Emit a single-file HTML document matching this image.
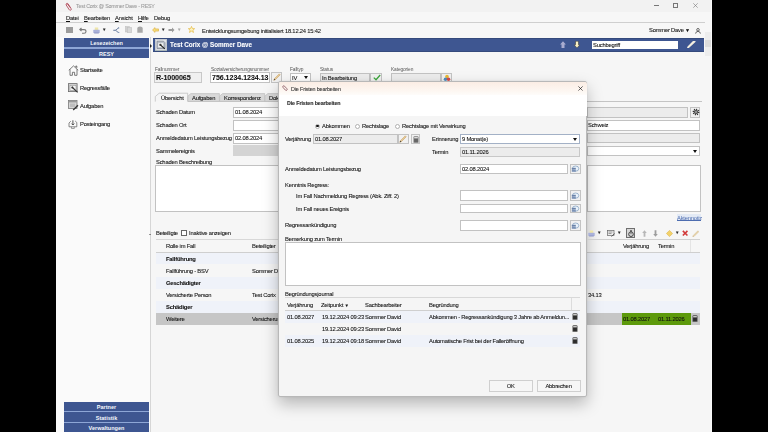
<!DOCTYPE html>
<html><head><meta charset="utf-8">
<style>
*{margin:0;padding:0;box-sizing:border-box}
html,body{width:768px;height:432px;overflow:hidden;background:#000}
body{-webkit-font-smoothing:antialiased;position:relative;font-family:"Liberation Sans",sans-serif;font-size:5.8px;letter-spacing:-0.2px;color:#111}
.a{position:absolute}
.t{position:absolute;will-change:transform;-webkit-text-stroke:0.08px currentColor;white-space:nowrap;line-height:8px;height:8px}
.b{font-weight:bold}
u{text-decoration-thickness:0.5px;text-underline-offset:0.8px}
.win{left:56px;top:0;width:656px;height:432px;background:#f7f7f7}
.fld{position:absolute;background:#fff;border:1px solid #c2c2c2}
.gry{background:#ececec}
.btn{position:absolute;background:#f1f1f1;border:1px solid #c3c3c3}
.blue{position:absolute;background:#3e5691;color:#f4f6fb;font-weight:bold;text-align:center;letter-spacing:0;padding-top:0.8px}
</style></head><body>
<div class="a win"></div>
<!-- title bar -->
<div class="a" style="left:56px;top:0;width:656px;height:11.7px;background:#f2f2f2"></div>
<div class="t" style="left:76px;top:2px;color:#9a9a9a;font-size:5.3px">Test Corix @ Sommer Dave - RESY</div>
<div class="a" style="left:653.5px;top:5.2px;width:5.5px;height:0.6px;background:#777"></div>
<div class="a" style="left:673px;top:3px;width:4.8px;height:4.8px;border:0.6px solid #777"></div>
<svg class="a" style="left:692.8px;top:2.8px" width="5" height="5" viewBox="0 0 5 5"><path d="M0.3 0.3 L4.7 4.7 M4.7 0.3 L0.3 4.7" stroke="#777" stroke-width="0.6"/></svg>
<!-- menu -->
<div class="t" style="left:65.8px;top:14px"><u>D</u>atei</div>
<div class="t" style="left:83.5px;top:14px"><u>B</u>earbeiten</div>
<div class="t" style="left:115px;top:14px"><u>A</u>nsicht</div>
<div class="t" style="left:137.7px;top:14px"><u>H</u>ilfe</div>
<div class="t" style="left:154px;top:14px">Debug</div>
<div class="a" style="left:56px;top:22px;width:649px;height:1px;background:#cfcfcf"></div>
<!-- status -->
<div class="t" style="left:201.7px;top:26.5px">Entwicklungsumgebung initialisiert 18.12.24 15:42</div>
<div class="t" style="left:649px;top:26px">Sommer Dave</div>
<div class="t" style="left:685px;top:26px;font-size:5px">&#9660;</div>

<!-- sidebar -->
<div class="a" style="left:56px;top:37px;width:94px;height:395px;background:#fafafa"></div>
<div class="a" style="left:150px;top:37px;width:1px;height:395px;background:#d6d6d6"></div>
<div class="blue" style="left:64px;top:38px;width:85px;height:9px;line-height:9px;font-size:5.5px">Lesezeichen</div>
<div class="a" style="left:64px;top:47px;width:85px;height:2px;background:#8ea6d6"></div>
<div class="blue" style="left:64px;top:49px;width:85px;height:9px;line-height:9px;font-size:5.5px">RESY</div>
<div class="t" style="left:80px;top:66px">Startseite</div>
<div class="t" style="left:80px;top:84px">Regressfälle</div>
<div class="t" style="left:80px;top:102px">Aufgaben</div>
<div class="t" style="left:80px;top:120px">Posteingang</div>
<div class="blue" style="left:64px;top:402px;width:85px;height:9px;line-height:9px;font-size:5.5px">Partner</div>
<div class="a" style="left:64px;top:411px;width:85px;height:1px;background:#8ea6d6"></div>
<div class="blue" style="left:64px;top:412px;width:85px;height:10px;line-height:10px;font-size:5.5px">Statistik</div>
<div class="a" style="left:64px;top:422px;width:85px;height:1px;background:#8ea6d6"></div>
<div class="blue" style="left:64px;top:423px;width:85px;height:9px;line-height:9px;font-size:5.5px">Verwaltungen</div>

<!-- main header -->
<div class="a" style="left:152.6px;top:38.3px;width:551.4px;height:13.3px;background:#3e5691;border-top:0.8px solid #354a7c;border-bottom:0.8px solid #354a7c"></div>
<div class="a" style="left:154.7px;top:39.2px;width:12px;height:11.5px;background:#d9dde3;border:1px solid #9aa"></div>
<div class="t b" style="left:169.7px;top:41px;color:#fff;font-size:6.3px;letter-spacing:0">Test Corix @ Sommer Dave</div>
<div class="fld" style="left:591.6px;top:40.6px;width:86.7px;height:8.7px;border:none"></div>
<div class="t" style="left:593px;top:41px">Suchbegriff</div>


<!-- main panel -->
<div class="a" style="left:151px;top:52px;width:553px;height:380px;background:#f6f6f6"></div>
<div class="a" style="left:704px;top:37px;width:8px;height:395px;background:#f6f6f6"></div>
<div class="a" style="left:705.2px;top:32px;width:6px;height:23.7px;background:#ededed"></div>
<div class="a" style="left:705.2px;top:40px;width:6px;height:7.4px;background:#dcdcdc"></div>
<div class="a" style="left:711.2px;top:0;width:0.8px;height:432px;background:#fafafa"></div>
<!-- top fields -->
<div class="t" style="left:155.3px;top:65.8px;font-size:4.8px;letter-spacing:-0.1px;color:#555;-webkit-text-stroke:0">Fallnummer</div>
<div class="fld" style="left:154.4px;top:72.2px;width:47.4px;height:10.4px;background:#f0f0f0;border-color:#c8c8c8"></div>
<div class="t b" style="left:156.2px;top:73.5px;font-size:7.2px;letter-spacing:-0.1px;line-height:8px">R-1000065</div>
<div class="t" style="left:210.5px;top:65.8px;font-size:4.8px;letter-spacing:-0.1px;color:#555;-webkit-text-stroke:0">Sozialversicherungsnummer</div>
<div class="fld" style="left:210px;top:72.2px;width:59.8px;height:10.4px"></div>
<div class="t b" style="left:211.8px;top:73.5px;font-size:7px;letter-spacing:0;line-height:8px">756.1234.1234.13</div>
<div class="btn" style="left:271px;top:72.2px;width:11px;height:10.4px"></div>
<div class="t" style="left:290.3px;top:65.8px;font-size:4.8px;letter-spacing:-0.1px;color:#555;-webkit-text-stroke:0">Falltyp</div>
<div class="fld" style="left:290px;top:72.5px;width:21px;height:10px"></div>
<div class="t" style="left:291.5px;top:73.5px">IV</div>
<div class="a" style="left:303.8px;top:76px;width:0;height:0;border-top:3px solid #111;border-left:2.6px solid transparent;border-right:2.6px solid transparent"></div>
<div class="t" style="left:320px;top:65.8px;font-size:4.8px;letter-spacing:-0.1px;color:#555;-webkit-text-stroke:0">Status</div>
<div class="fld" style="left:320px;top:72.5px;width:50.3px;height:10px;background:#ececec"></div>
<div class="t" style="left:321.5px;top:73.5px">In Bearbeitung</div>
<div class="btn" style="left:370.3px;top:72.5px;width:11.7px;height:10px"></div>
<div class="t" style="left:390.6px;top:65.8px;font-size:4.8px;letter-spacing:-0.1px;color:#555;-webkit-text-stroke:0">Kategorien</div>
<div class="fld" style="left:390.6px;top:72.5px;width:50px;height:10px;background:#ececec"></div>
<div class="btn" style="left:440.6px;top:72.5px;width:11.7px;height:10px"></div>
<!-- tabs -->
<div class="a" style="left:187.7px;top:101.2px;width:514.3px;height:0.8px;background:#c4c4c4"></div>
<svg class="a" style="left:150px;top:90px" width="140" height="13" viewBox="150 90 140 13">
<path d="M155.3 101.6 V96.5 L159.2 93.2 H187.7 V101.6" fill="#f5f5f5" stroke="#b9b9b9" stroke-width="0.7"/>
<path d="M187.9 101.4 V96.2 L190.8 93.6 H219.4 V101.4 Z" fill="#d9d9d9" stroke="#bdbdbd" stroke-width="0.7"/>
<path d="M219.6 101.4 V96.2 L222.5 93.6 H264.7 V101.4 Z" fill="#d9d9d9" stroke="#bdbdbd" stroke-width="0.7"/>
<path d="M264.9 101.4 V96.2 L267.8 93.6 H300 V101.4 Z" fill="#d9d9d9" stroke="#bdbdbd" stroke-width="0.7"/>
</svg>
<div class="t" style="left:161px;top:93.6px">Übersicht</div>
<div class="t" style="left:192px;top:93.8px">Aufgaben</div>
<div class="t" style="left:223.5px;top:93.8px">Korrespondenz</div>
<div class="t" style="left:268.5px;top:93.8px">Dokumente</div>
<!-- form rows -->
<div class="t" style="left:155.5px;top:108.3px">Schaden Datum</div>
<div class="fld" style="left:233.3px;top:106.5px;width:60px;height:11px"></div>
<div class="t" style="left:235px;top:108.3px">01.08.2024</div>
<div class="t" style="left:155.5px;top:121px">Schaden Ort</div>
<div class="fld" style="left:233.3px;top:119.5px;width:60px;height:11px"></div>
<div class="t" style="left:155.5px;top:134.2px">Anmeldedatum Leistungsbezug</div>
<div class="fld" style="left:233.3px;top:132.7px;width:60px;height:11px"></div>
<div class="t" style="left:235px;top:134.2px">02.08.2024</div>
<div class="t" style="left:155.5px;top:147px">Sammelereignis</div>
<div class="a" style="left:233.3px;top:145.4px;width:60px;height:11px;background:#d4d4d4"></div>
<div class="t" style="left:155.5px;top:157.6px">Schaden Beschreibung</div>
<div class="fld" style="left:155.1px;top:164.8px;width:140px;height:47px"></div>
<div class="fld" style="left:587px;top:106.5px;width:101.3px;height:11.2px;background:#ececec"></div>
<div class="btn" style="left:690.4px;top:106.5px;width:10px;height:11.2px"></div>
<div class="fld" style="left:587px;top:119.5px;width:113.3px;height:11.1px"></div>
<div class="t" style="left:588.4px;top:121px">Schweiz</div>
<div class="fld" style="left:587px;top:132.7px;width:113.3px;height:10.8px;background:#ececec"></div>
<div class="fld" style="left:587px;top:145.6px;width:113.3px;height:10.6px"></div>
<div class="a" style="left:692.6px;top:149.6px;width:0;height:0;border-top:3px solid #111;border-left:2.6px solid transparent;border-right:2.6px solid transparent"></div>
<div class="fld" style="left:587px;top:165.2px;width:113.6px;height:46.4px"></div>
<div class="a" style="left:676.5px;top:214.2px;width:24.5px;height:7px;background:#e3eaf5"></div>
<div class="t" style="left:676.9px;top:213.6px;color:#4d6db0;-webkit-text-stroke:0">Aktennotiz</div>
<div class="a" style="left:677px;top:220.2px;width:24px;height:0.5px;background:#4d6db0"></div>
<!-- beteiligte -->
<div class="t" style="left:156.1px;top:229px">Beteiligte</div>
<div class="a" style="left:181.4px;top:230.2px;width:5.5px;height:5.5px;border:0.7px solid #666;background:#fff"></div>
<div class="a" style="left:148.6px;top:234px;width:0;height:0;border-bottom:1.8px solid #333;border-left:1.6px solid transparent;border-right:1.6px solid transparent"></div>
<div class="a" style="left:690px;top:240px;width:0.6px;height:12px;background:#e4e4e4"></div>
<div class="t" style="left:189.2px;top:229px">Inaktive anzeigen</div>
<div class="a" style="left:155.6px;top:238.8px;width:544px;height:1px;background:#d8d8d8"></div>
<div class="t" style="left:165.8px;top:242px">Rolle im Fall</div>
<div class="t" style="left:252.4px;top:242px">Beteiligter</div>
<div class="t" style="left:622.8px;top:242.2px">Verjährung</div>
<div class="t" style="left:657.7px;top:242.2px">Termin</div>
<div class="a" style="left:155.6px;top:252px;width:544px;height:1px;background:#cfcfcf"></div>
<div class="a" style="left:155.6px;top:253px;width:544px;height:11px;background:#eff2f9"></div>
<div class="t b" style="left:165.8px;top:254.6px">Fallführung</div>
<div class="t" style="left:165.8px;top:266.5px">Fallführung - BSV</div>
<div class="t" style="left:252.4px;top:266.5px">Sommer David</div>
<div class="a" style="left:155.6px;top:276.5px;width:544px;height:12px;background:#eff2f9"></div>
<div class="t b" style="left:165.8px;top:278.5px">Geschädigter</div>
<div class="t" style="left:165.8px;top:290.7px">Versicherte Person</div>
<div class="t" style="left:252.4px;top:290.7px">Test Corix</div>
<div class="t" style="left:588px;top:291.1px">34.13</div>
<div class="a" style="left:155.6px;top:300.5px;width:544px;height:12px;background:#eff2f9"></div>
<div class="t b" style="left:165.8px;top:302.9px">Schädiger</div>
<div class="a" style="left:155.6px;top:313px;width:466.4px;height:11.6px;background:#c6c6c6"></div>
<div class="a" style="left:622px;top:313px;width:68.8px;height:11.6px;background:#5d9a0c"></div>
<div class="a" style="left:690.8px;top:313px;width:8.9px;height:11.6px;background:#c6c6c6"></div>
<div class="t" style="left:165.8px;top:314.9px">Weitere</div>
<div class="t" style="left:252.4px;top:314.9px">Versicherung</div>
<div class="t" style="left:622.8px;top:314.9px">01.08.2027</div>
<div class="t" style="left:657.7px;top:314.9px">01.11.2026</div>


<!-- dialog -->
<div class="a" style="left:278px;top:81.4px;width:309px;height:315.3px;background:#f5f5f5;border:0.5px solid #b8b8b8;border-radius:2px;box-shadow:0 7px 16px rgba(0,0,0,0.26),0 0 3px rgba(0,0,0,0.08)"></div>
<div class="a" style="left:278.5px;top:82px;width:308px;height:13px;background:linear-gradient(#fbede4,#fdf7f2 70%,#fefcfa);border-radius:2px 2px 0 0"></div>
<div class="t" style="left:290.8px;top:84.5px;font-size:5.4px;letter-spacing:-0.15px;color:#333">Die Fristen bearbeiten</div>
<svg class="a" style="left:578.3px;top:85.5px" width="5" height="5" viewBox="0 0 5 5"><path d="M0.4 0.4 L4.6 4.6 M4.6 0.4 L0.4 4.6" stroke="#222" stroke-width="0.7"/></svg>
<div class="a" style="left:278.5px;top:95px;width:308px;height:21px;background:#fff"></div>
<div class="t b" style="left:286.7px;top:99px;-webkit-text-stroke:0.15px #333;color:#333;font-size:5.3px;letter-spacing:-0.1px">Die Fristen bearbeiten</div>
<!-- radios -->
<div class="a" style="left:315px;top:123.5px;width:5px;height:5px;border-radius:50%;border:0.6px solid #b0b0b0;background:#fff"></div>
<div class="a" style="left:316.3px;top:124.8px;width:2.4px;height:2.4px;border-radius:50%;background:#111"></div>
<div class="t" style="left:322px;top:122px">Abkommen</div>
<div class="a" style="left:354.5px;top:123.5px;width:5px;height:5px;border-radius:50%;border:0.6px solid #b0b0b0;background:#fff"></div>
<div class="t" style="left:361.7px;top:122px">Rechtslage</div>
<div class="a" style="left:395px;top:123.5px;width:5px;height:5px;border-radius:50%;border:0.6px solid #b0b0b0;background:#fff"></div>
<div class="t" style="left:402px;top:122px">Rechtslage mit Verwirkung</div>
<!-- verjaehrung -->
<div class="t" style="left:285px;top:135px">Verjährung</div>
<div class="fld" style="left:313px;top:133.7px;width:84.5px;height:10.6px;background:#ececec"></div>
<div class="t" style="left:314.5px;top:135px">01.08.2027</div>
<div class="btn" style="left:397.5px;top:133.7px;width:11px;height:10.6px"></div>
<div class="btn" style="left:410.6px;top:133.7px;width:9.8px;height:10.6px"></div>
<div class="t" style="left:431.7px;top:134.8px">Erinnerung</div>
<div class="fld" style="left:460.3px;top:133.9px;width:120px;height:10.1px;border-color:#a3b1c6"></div>
<div class="t" style="left:462px;top:134.8px">9 Monat(e)</div>
<div class="a" style="left:573.2px;top:137.6px;width:0;height:0;border-top:3px solid #111;border-left:2.6px solid transparent;border-right:2.6px solid transparent"></div>
<div class="t" style="left:432.2px;top:147.7px">Termin</div>
<div class="fld" style="left:460.3px;top:146.8px;width:120px;height:10.1px;background:#ececec;border-color:#c8c8c8"></div>
<div class="t" style="left:462px;top:147.7px">01.11.2026</div>
<div class="t" style="left:284.8px;top:165.2px">Anmeldedatum Leistungsbezug</div>
<div class="fld" style="left:460.3px;top:163.6px;width:108.1px;height:10.9px"></div>
<div class="t" style="left:462px;top:165.2px">02.08.2024</div>
<div class="btn" style="left:569.6px;top:163.6px;width:11.1px;height:10.9px"></div>
<div class="t" style="left:284.8px;top:180.9px">Kenntnis Regress:</div>
<div class="t" style="left:295.7px;top:191.8px">Im Fall Nachmeldung Regress (Abk. Ziff. 2)</div>
<div class="fld" style="left:460.3px;top:190.3px;width:108.1px;height:10.4px"></div>
<div class="btn" style="left:569.6px;top:190.3px;width:11.1px;height:10.4px"></div>
<div class="t" style="left:295.7px;top:204.5px">Im Fall neues Ereignis</div>
<div class="fld" style="left:460.3px;top:203.5px;width:108.1px;height:9.9px"></div>
<div class="btn" style="left:569.6px;top:203.5px;width:11.1px;height:9.9px"></div>
<div class="t" style="left:284.8px;top:221.4px">Regressankündigung</div>
<div class="fld" style="left:460.3px;top:220.4px;width:108.1px;height:10.4px"></div>
<div class="btn" style="left:569.6px;top:220.4px;width:11.1px;height:10.4px"></div>
<div class="t" style="left:284.8px;top:234.9px">Bemerkung zum Termin</div>
<div class="fld" style="left:284.8px;top:242.2px;width:295.9px;height:43.8px"></div>
<div class="t" style="left:284.8px;top:289.8px">Begründungsjournal</div>
<div class="a" style="left:284.8px;top:297px;width:295.2px;height:1px;background:#d8d8d8"></div>
<div class="t" style="left:286.9px;top:300.6px">Verjährung</div>
<div class="t" style="left:321px;top:300.6px">Zeitpunkt <span style="font-size:4.5px">&#9660;</span></div>
<div class="t" style="left:364.5px;top:300.6px">Sachbearbeiter</div>
<div class="t" style="left:428.8px;top:300.6px">Begründung</div>
<div class="a" style="left:571.4px;top:298px;width:0.6px;height:12px;background:#dcdcdc"></div>
<div class="a" style="left:284.8px;top:310px;width:295.2px;height:1px;background:#cfcfcf"></div>
<div class="a" style="left:284.8px;top:311px;width:295.2px;height:12px;background:#eff2f9"></div>
<div class="a" style="left:284.8px;top:335px;width:295.2px;height:12px;background:#eff2f9"></div>
<div class="t" style="left:286.9px;top:313px">01.08.2027</div>
<div class="t" style="left:321.8px;top:313px">19.12.2024 09:23</div>
<div class="t" style="left:364.7px;top:313px">Sommer David</div>
<div class="t" style="left:428.8px;top:313px">Abkommen - Regressankündigung 3 Jahre ab Anmeldun...</div>
<div class="t" style="left:321.8px;top:324.6px">19.12.2024 09:23</div>
<div class="t" style="left:364.7px;top:324.6px">Sommer David</div>
<div class="t" style="left:286.9px;top:337.1px">01.08.2025</div>
<div class="t" style="left:321.8px;top:337.1px">19.12.2024 09:18</div>
<div class="t" style="left:364.7px;top:337.1px">Sommer David</div>
<div class="t" style="left:428.8px;top:337.1px">Automatische Frist bei der Falleröffnung</div>
<div class="btn" style="left:489.3px;top:380.4px;width:43.4px;height:11.2px;background:#f6f6f6;border-color:#cfcfcf"></div>
<div class="t" style="left:489.3px;top:381.8px;width:43.3px;text-align:center">OK</div>
<div class="btn" style="left:537.3px;top:380.4px;width:43.5px;height:11.2px;background:#f6f6f6;border-color:#cfcfcf"></div>
<div class="t" style="left:537.3px;top:381.8px;width:43.1px;text-align:center">Abbrechen</div>


<!-- ICONS -->
<!-- title app icon -->
<svg class="a" style="left:65px;top:1.5px" width="8" height="9" viewBox="0 0 8 9"><path d="M2 1.5 L6 6.5 Q6.8 8 5.4 8.2 Q4.5 8.3 4 7.4 L1.2 3 Q0.8 1.8 1.8 1.4 Q2.7 1.1 3.2 2 L5.6 5.8" fill="none" stroke="#b24a5a" stroke-width="0.9"/></svg>
<!-- toolbar -->
<div class="a" style="left:66.3px;top:26.8px;width:6.6px;height:6.3px;background:#9c9c9c"></div>
<svg class="a" style="left:79px;top:26.5px" width="8" height="7" viewBox="0 0 8 7"><path d="M2.5 1 L0.8 2.6 L2.5 4.2 M1 2.6 H5 Q7 2.6 7 4.5 Q7 6.3 5 6.3 H3" fill="none" stroke="#7a7a7a" stroke-width="1.1"/></svg>
<svg class="a" style="left:92.5px;top:26.5px" width="7" height="7" viewBox="0 0 7 7"><rect x="1.8" y="0.5" width="3.4" height="2.5" fill="#efe6a8"/><rect x="0.3" y="2.8" width="6.4" height="3.2" rx="0.6" fill="#aab2da"/><rect x="1.2" y="5.5" width="4.6" height="1" fill="#8d95c4"/></svg>
<div class="t" style="left:102px;top:26px;font-size:4.5px;color:#222">&#9660;</div>
<svg class="a" style="left:113px;top:26.8px" width="6.5" height="6.5" viewBox="0 0 6.5 6.5"><path d="M5.8 0.6 L2.6 3.3 L5.8 5.9" fill="none" stroke="#6f82a3" stroke-width="1"/><path d="M0.3 3.3 H2.8" stroke="#6f82a3" stroke-width="1.1"/><circle cx="5.6" cy="1" r="0.8" fill="#8a9bb8"/><circle cx="5.6" cy="5.6" r="0.8" fill="#8a9bb8"/></svg>
<svg class="a" style="left:125px;top:26.3px" width="7" height="7" viewBox="0 0 7 7"><rect x="0.3" y="0.5" width="4" height="5.5" fill="#d0d0d0" stroke="#bdbdbd" stroke-width="0.5"/><rect x="2.7" y="1.3" width="4" height="5.5" fill="#d8d8d8" stroke="#bdbdbd" stroke-width="0.5"/></svg>
<svg class="a" style="left:137.3px;top:26.3px" width="6" height="7" viewBox="0 0 6 7"><path d="M0.3 2 Q0.3 0.4 3 0.4 Q5.7 0.4 5.7 2 V6.7 H0.3 Z" fill="#a8a8a8"/></svg>
<svg class="a" style="left:151.8px;top:26.8px" width="7" height="6" viewBox="0 0 7 6"><path d="M0.5 3 L3 0.6 V1.9 H6.5 V4.1 H3 V5.4 Z" fill="#f6dc78" stroke="#d9a93a" stroke-width="0.6"/></svg>
<div class="t" style="left:160.8px;top:26px;font-size:4.5px;color:#222">&#9660;</div>
<svg class="a" style="left:167.8px;top:26.8px" width="7" height="6" viewBox="0 0 7 6"><path d="M6.5 3 L4 0.6 V1.9 H0.5 V4.1 H4 V5.4 Z" fill="#9a9a9a"/></svg>
<div class="t" style="left:176.8px;top:26px;font-size:4.5px;color:#aaa">&#9660;</div>
<svg class="a" style="left:188px;top:26.3px" width="7" height="7" viewBox="0 0 10 10"><path d="M5 0.6 L6.3 3.6 L9.5 3.8 L7 5.9 L7.9 9.2 L5 7.4 L2.1 9.2 L3 5.9 L0.5 3.8 L3.7 3.6 Z" fill="#fdf2c0" stroke="#e0b232" stroke-width="0.9"/></svg>
<!-- user icon -->
<svg class="a" style="left:694.5px;top:27.5px" width="6" height="6" viewBox="0 0 6 6"><circle cx="3" cy="1.8" r="1.3" fill="none" stroke="#444" stroke-width="0.8"/><path d="M0.6 5.6 Q0.8 3.4 3 3.4 Q5.2 3.4 5.4 5.6" fill="none" stroke="#444" stroke-width="0.8"/></svg>
<!-- sidebar icons -->
<svg class="a" style="left:67.5px;top:64.5px" width="11" height="11" viewBox="0 0 11 11"><path d="M0.8 5.3 L5.5 0.9 L10.2 5.3 M2 4.3 V10.3 H4.4 V7.3 H6.6 V10.3 H9 V4.3 M7.8 2.2 V1 H8.8 V3.1" fill="none" stroke="#5a5a5a" stroke-width="0.8"/></svg>
<svg class="a" style="left:67.8px;top:82.8px" width="11" height="10" viewBox="0 0 11 10"><rect x="0.5" y="0.6" width="8.6" height="8" fill="#cfcfcf" stroke="#6c6c6c" stroke-width="0.8"/><rect x="2" y="2.4" width="6" height="5" fill="#f4f4f4" stroke="#888" stroke-width="0.5"/><path d="M4 4 L9.6 9.4" stroke="#333" stroke-width="1.1"/><circle cx="4.3" cy="4.4" r="1" fill="#333"/></svg>
<svg class="a" style="left:67.5px;top:100px" width="11" height="11" viewBox="0 0 11 11"><rect x="0.5" y="0.5" width="8.5" height="8" fill="#d6d6d6" stroke="#7a7a7a" stroke-width="0.8"/><rect x="0.8" y="0.8" width="8" height="1.6" fill="#9a9a9a"/><rect x="2" y="3.5" width="5" height="3.5" fill="#bdbdbd"/><path d="M10 5.2 L5.2 10" stroke="#333" stroke-width="1.3"/></svg>
<svg class="a" style="left:68.3px;top:120px" width="10" height="9" viewBox="0 0 10 9"><path d="M1 6.8 H8.8 V2.5 L7.2 1 M1 6.8 V3 L2.8 1.2" fill="none" stroke="#6a6a6a" stroke-width="0.8"/><path d="M4.9 0.3 V5 M3.5 3.6 L4.9 5 L6.3 3.6" fill="none" stroke="#444" stroke-width="0.9"/><path d="M3.5 6.8 V8.5 H6.3 V6.8" fill="none" stroke="#6a6a6a" stroke-width="0.6"/></svg>
<!-- header icon -->
<svg class="a" style="left:154.7px;top:39.2px" width="12" height="11.5" viewBox="0 0 12 11.5"><rect x="0.5" y="0.5" width="11" height="10.5" fill="#e4e6ea" stroke="#c6cad2" stroke-width="0.8"/><path d="M2 2.2 H8.5 L10 3.7 V9.5 H2 Z" fill="#b9bfc9" stroke="#6b7280" stroke-width="0.6"/><rect x="3.2" y="4.2" width="5" height="4" fill="#f4f4f4"/><path d="M5 5.5 L9.8 9.8" stroke="#222" stroke-width="1.1"/><circle cx="5.4" cy="5.9" r="1.1" fill="#333"/></svg>
<div class="a" style="left:149.8px;top:43.5px;width:0;height:0;border-left:2px solid #222;border-top:2px solid transparent;border-bottom:2px solid transparent"></div>
<!-- header arrows -->
<svg class="a" style="left:560px;top:40.9px" width="6" height="7.2" viewBox="0 0 6 7.2"><path d="M3 0.3 L5.9 3.4 H4.5 V7 H1.5 V3.4 H0.1 Z" fill="#a9acd0"/></svg>
<svg class="a" style="left:574.4px;top:40.9px" width="6" height="7.2" viewBox="0 0 6 7.2"><path d="M3 6.9 L5.9 3.8 H4.5 V0.2 H1.5 V3.8 H0.1 Z" fill="#fbf2c6" stroke="#2a2a2a" stroke-width="0.5"/></svg>
<svg class="a" style="left:687px;top:40.8px" width="8.5" height="7.5" viewBox="0 0 8.5 7.5"><path d="M7.6 0.6 L1.6 6.1 L0.6 7 L1.4 5.8 L7 0.1 Z" fill="#f3eee0" stroke="#f3eee0" stroke-width="1.6"/></svg>


<!-- pencil small icon def -->
<svg width="0" height="0" style="position:absolute"><defs>
<g id="pen"><path d="M6.6 0.9 L7.6 1.9 L2.4 7.1 L0.8 7.7 L1.4 6.1 Z" fill="#e9cf9a" stroke="#b98c4c" stroke-width="0.5"/><path d="M0.8 7.7 L1.4 6.1 L2.4 7.1 Z" fill="#333"/></g>
<g id="calc"><path d="M0.5 1.4 Q0.5 0.3 1.6 0.3 H4.4 Q5.5 0.3 5.5 1.4 V6.8 H0.5 Z" fill="#4a4a4a"/><rect x="1.2" y="1" width="3.6" height="1.3" fill="#c8c8c8"/><rect x="1.2" y="3" width="3.6" height="3.1" fill="#2c2c2c"/></g>
<g id="look"><ellipse cx="4.6" cy="3.6" rx="3.2" ry="2.6" fill="#eaf3fb" stroke="#6d8fb3" stroke-width="0.6"/><rect x="0.8" y="2.8" width="4" height="1.8" fill="#6b82a8"/><rect x="0.8" y="5" width="4" height="1.8" fill="#7c93b7"/></g>
</defs></svg>
<svg class="a" style="left:272.5px;top:73.4px" width="8" height="8" viewBox="0 0 8.4 8.4"><use href="#pen"/></svg>
<svg class="a" style="left:399px;top:134.8px" width="8" height="8" viewBox="0 0 8.4 8.4"><use href="#pen"/></svg>
<svg class="a" style="left:412.5px;top:135.5px" width="6" height="7" viewBox="0 0 6 7"><path d="M0.5 1.4 Q0.5 0.3 1.6 0.3 H4.4 Q5.5 0.3 5.5 1.4 V6.8 H0.5 Z" fill="#777"/><rect x="1.2" y="1" width="3.6" height="1.3" fill="#ddd"/><rect x="1.2" y="3" width="3.6" height="3.1" fill="#666"/></svg>
<svg class="a" style="left:572.2px;top:312.7px" width="6" height="7" viewBox="0 0 6 7"><use href="#calc"/></svg>
<svg class="a" style="left:572.2px;top:324.9px" width="6" height="7" viewBox="0 0 6 7"><use href="#calc"/></svg>
<svg class="a" style="left:572.2px;top:337px" width="6" height="7" viewBox="0 0 6 7"><use href="#calc"/></svg>
<svg class="a" style="left:692.3px;top:315px" width="6" height="7" viewBox="0 0 6 7"><use href="#calc"/></svg>
<svg class="a" style="left:571px;top:165.2px" width="8.5" height="8" viewBox="0 0 8.5 8"><use href="#look"/></svg>
<svg class="a" style="left:571px;top:191.6px" width="8.5" height="8" viewBox="0 0 8.5 8"><use href="#look"/></svg>
<svg class="a" style="left:571px;top:204.5px" width="8.5" height="8" viewBox="0 0 8.5 8"><use href="#look"/></svg>
<svg class="a" style="left:571px;top:221.7px" width="8.5" height="8" viewBox="0 0 8.5 8"><use href="#look"/></svg>
<!-- check -->
<svg class="a" style="left:372.5px;top:73.8px" width="8" height="7" viewBox="0 0 8 7"><path d="M0.8 3.6 L3 5.8 L7.2 1" fill="none" stroke="#3aa03a" stroke-width="1.3"/></svg>
<!-- kategorien -->
<svg class="a" style="left:442.5px;top:73.5px" width="8" height="8" viewBox="0 0 8 8"><circle cx="4" cy="2.6" r="1.8" fill="#e3b533"/><circle cx="2.5" cy="5.2" r="1.8" fill="#4b88b8"/><circle cx="5.5" cy="5.2" r="1.8" fill="#c94848"/></svg>
<!-- dialog title icon -->
<svg class="a" style="left:282px;top:85px" width="6" height="6" viewBox="0 0 7 7"><path d="M1.5 1 Q0.4 1.8 1.3 3 L4 6 Q5.2 6.8 5.9 5.8 Q6.4 5 5.6 4.2 L3 1.4 Q2.4 0.6 1.5 1 Z" fill="none" stroke="#8e5a64" stroke-width="1"/></svg>
<!-- gear -->
<svg class="a" style="left:691.5px;top:108px" width="8" height="8" viewBox="0 0 8 8"><circle cx="4" cy="4" r="2.6" fill="none" stroke="#333" stroke-width="1.5" stroke-dasharray="1.1 0.9"/><circle cx="4" cy="4" r="2" fill="#444"/><circle cx="4" cy="4" r="0.8" fill="#eee"/></svg>
<!-- table toolbar -->
<svg class="a" style="left:587.9px;top:230px" width="7" height="7" viewBox="0 0 7 7"><rect x="1.8" y="0.5" width="3.4" height="2.5" fill="#efe6a8"/><rect x="0.3" y="2.8" width="6.4" height="3.2" rx="0.6" fill="#aab2da"/><rect x="1.2" y="5.5" width="4.6" height="1" fill="#8d95c4"/></svg>
<div class="t" style="left:597px;top:229.3px;font-size:4.5px;color:#222">&#9660;</div>
<svg class="a" style="left:607px;top:230px" width="8" height="7" viewBox="0 0 8 7"><rect x="0.4" y="0.5" width="6.6" height="5" fill="#ececec" stroke="#666" stroke-width="0.7"/><path d="M1.5 2 H5.5 M1.5 3.5 H4.5" stroke="#666" stroke-width="0.6"/><path d="M7.6 3.5 L4.6 6.5" stroke="#555" stroke-width="1"/></svg>
<div class="t" style="left:616.8px;top:229.3px;font-size:4.5px;color:#222">&#9660;</div>
<div class="a" style="left:626.3px;top:227.9px;width:8.5px;height:10.1px;background:#d8d8d8;border:0.8px solid #6f6f6f"></div>
<svg class="a" style="left:627.8px;top:229.5px" width="6" height="7" viewBox="0 0 6 7"><circle cx="3" cy="4.2" r="2.3" fill="none" stroke="#333" stroke-width="0.9"/><rect x="2" y="0.4" width="2" height="1.2" fill="#333"/><path d="M3 4.2 V2.9" stroke="#333" stroke-width="0.7"/></svg>
<svg class="a" style="left:642.3px;top:229.5px" width="5" height="7" viewBox="0 0 5 7"><path d="M2.5 0.3 L4.8 3 H3.4 V6.7 H1.6 V3 H0.2 Z" fill="#b7b7b7"/></svg>
<svg class="a" style="left:652.6px;top:229.5px" width="5" height="7" viewBox="0 0 5 7"><path d="M2.5 6.7 L4.8 4 H3.4 V0.3 H1.6 V4 H0.2 Z" fill="#9d9d9d"/></svg>
<svg class="a" style="left:665.5px;top:229.8px" width="7" height="7" viewBox="0 0 7 7"><path d="M3.5 0.4 L6.6 3.5 L3.5 6.6 L0.4 3.5 Z" fill="#f3d26a" stroke="#d7a835" stroke-width="0.5"/></svg>
<div class="t" style="left:674.8px;top:229.3px;font-size:4.5px;color:#222">&#9660;</div>
<svg class="a" style="left:682px;top:230.3px" width="6.3" height="6.3" viewBox="0 0 6 6"><path d="M0.8 0.8 L5.2 5.2 M5.2 0.8 L0.8 5.2" stroke="#d23a3a" stroke-width="1.5"/></svg>
<svg class="a" style="left:691.5px;top:229.5px" width="7.5" height="7.5" viewBox="0 0 8.4 8.4"><path d="M6.6 0.9 L7.6 1.9 L2.4 7.1 L0.8 7.7 L1.4 6.1 Z" fill="#ecd9b0" stroke="#c8ad7c" stroke-width="0.5"/></svg>
<div class="a" style="left:587px;top:239.2px;width:113px;height:0.8px;background:#d0d0d0"></div>

</body></html>
